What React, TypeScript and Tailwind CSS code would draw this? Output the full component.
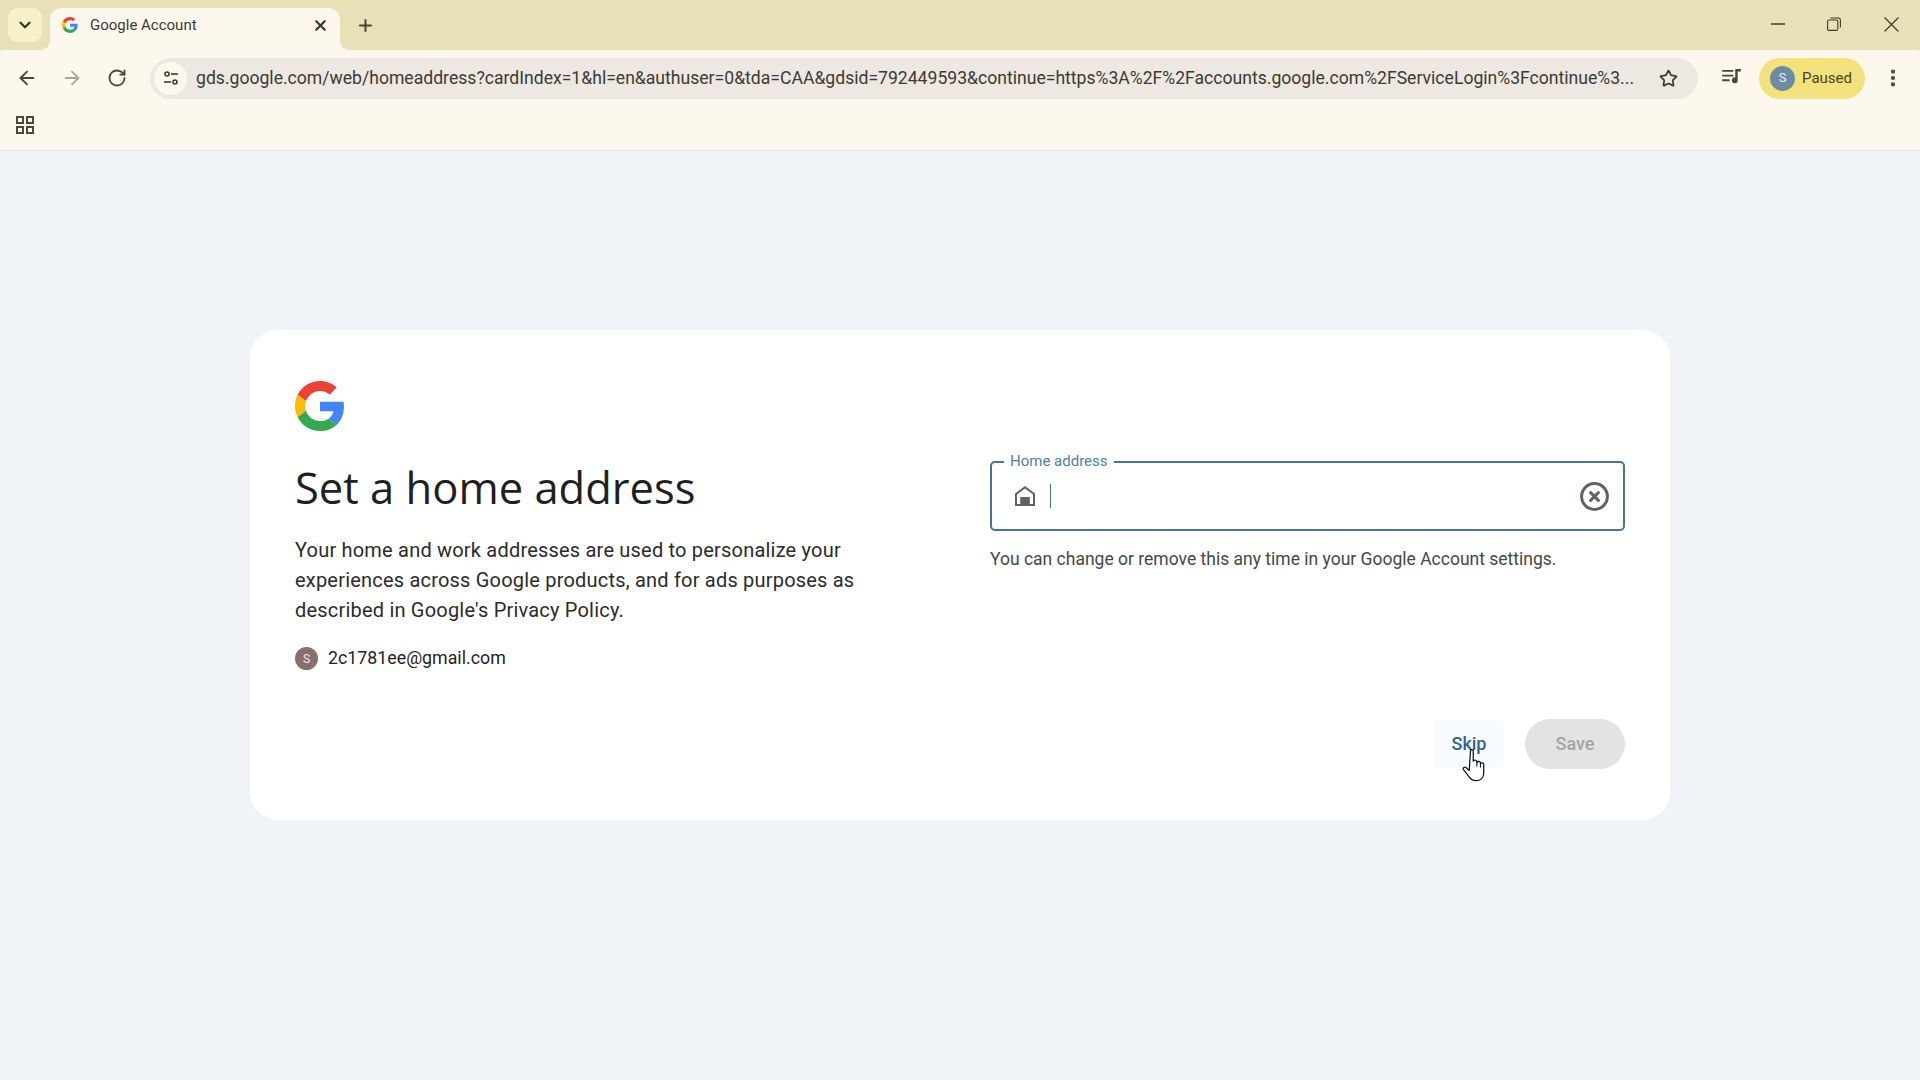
import React from 'react';
import { ArrowLeft, ArrowRight, ChevronDown, CircleX, MoreVertical, Plus, RotateCw, Star, X } from 'lucide-react';

const GoogleG: React.FC<{ className?: string }> = ({ className }) => (
  <svg viewBox="0 0 48 48" className={className}>
    <path fill="#EA4335" d="M24 9.5c3.54 0 6.71 1.22 9.21 3.6l6.85-6.85C35.9 2.38 30.47 0 24 0 14.62 0 6.51 5.38 2.56 13.22l7.98 6.19C12.43 13.72 17.74 9.5 24 9.5z" />
    <path fill="#4285F4" d="M46.98 24.55c0-1.57-.15-3.09-.38-4.55H24v9.02h12.94c-.58 2.96-2.26 5.48-4.78 7.18l7.73 6c4.51-4.18 7.09-10.36 7.09-17.65z" />
    <path fill="#FBBC05" d="M10.53 28.59c-.48-1.45-.76-2.99-.76-4.59s.27-3.14.76-4.59l-7.98-6.19C.92 16.46 0 20.12 0 24c0 3.88.92 7.54 2.56 10.78l7.97-6.19z" />
    <path fill="#34A853" d="M24 48c6.48 0 11.93-2.13 15.89-5.81l-7.73-6c-2.15 1.45-4.92 2.3-8.16 2.3-6.26 0-11.57-4.22-13.47-9.91l-7.98 6.19C6.51 42.62 14.62 48 24 48z" />
  </svg>
);

const TabStrip: React.FC = () => (
  <div className="h-[50px] flex bg-[#e8e1b8] pl-2">
    <div className="w-[34px] h-[34px] mt-2 rounded-[10px] bg-[#f8f1c8] flex items-center justify-center text-[#3a3524]">
      <ChevronDown size={18} strokeWidth={3} />
    </div>
    <div className="relative ml-2 w-[290px] h-[42px] mt-2 pb-[8px] bg-[#fdf8ee] rounded-t-[12px] flex items-center pl-[12px]">
      <span className="absolute bottom-0 -left-[10px] w-[10px] h-[10px] bg-[radial-gradient(circle_at_0_0,transparent_10px,#fdf8ee_10px)]" />
      <span className="absolute bottom-0 -right-[10px] w-[10px] h-[10px] bg-[radial-gradient(circle_at_100%_0,transparent_10px,#fdf8ee_10px)]" />
      <GoogleG className="w-4 h-4" />
      <span className="ml-[12px] text-[15px] text-[#3c3a33]">Google Account</span>
      <X size={17} strokeWidth={3} className="ml-auto mr-[11px] text-[#3a3524]" />
    </div>
    <div className="ml-[8px] h-[34px] mt-2 w-[34px] flex items-center justify-center text-[#4b4530]">
      <Plus size={19} strokeWidth={2.5} />
    </div>
    <div className="ml-auto flex text-[#3d3a2a]">
      <div className="w-[56px] h-[48px] flex items-center justify-center">
        <div className="w-[14px] h-[1.5px] bg-[#6d6647]" />
      </div>
      <div className="w-[56px] h-[48px] flex items-center justify-center">
        <svg viewBox="0 0 14 14" className="w-[14px] h-[14px]" fill="none" stroke="currentColor" strokeWidth="1.1">
          <rect x="0.6" y="3" width="10.2" height="10.4" rx="1.4" />
          <path d="M3.4 1h7.8c1.2 0 2.2 1 2.2 2.2v7.4" />
        </svg>
      </div>
      <div className="w-[58px] h-[48px] flex items-center justify-center">
        <svg viewBox="0 0 14 14" className="w-[15px] h-[15px]" fill="none" stroke="currentColor" strokeWidth="1.1">
          <path d="M0.5 0.5l13 13M13.5 0.5l-13 13" />
        </svg>
      </div>
    </div>
  </div>
);

const Toolbar: React.FC = () => (
  <div className="h-[50px] pt-[6px] bg-[#fdf8ee] rounded-t-[10px] flex items-center pl-[16px] text-[#4c473b]">
    <ArrowLeft size={22} strokeWidth={2} />
    <ArrowRight size={22} strokeWidth={2} className="ml-[23px] text-[#aaa69b]" />
    <RotateCw size={20} strokeWidth={2.2} className="ml-[24px]" />
    <div className="ml-[23px] w-[1548px] h-[41px] rounded-full bg-[#ede8e1] flex items-center pl-[4px] pr-[20px]">
      <div className="w-[33px] h-[33px] rounded-full bg-[#fdf8ee] flex items-center justify-center shrink-0">
        <svg viewBox="0 0 16 16" className="w-4 h-4" fill="none" stroke="#3f3b31" strokeWidth="1.6">
          <circle cx="4" cy="4" r="2" />
          <path d="M8 4h7" />
          <path d="M1 12h7" />
          <circle cx="12" cy="12" r="2" />
        </svg>
      </div>
      <span className="ml-[9px] pt-[1px] text-[17.6px] text-[#3c3a35] whitespace-nowrap w-[1446px]">
        gds.google.com/web/homeaddress?cardIndex=1&amp;hl=en&amp;authuser=0&amp;tda=CAA&amp;gdsid=792449593&amp;continue=https%3A%2F%2Faccounts.google.com%2FServiceLogin%3Fcontinue%3...
      </span>
      <Star size={19} strokeWidth={2.2} className="ml-auto text-[#3f3b31]" />
    </div>
    <svg viewBox="0 0 20 16" className="ml-[24px] w-[19px] h-[15px] -mt-[3px] text-[#4c473b]" fill="currentColor">
      <path d="M0 1h12v2H0zM0 6h12v2H0zM0 11h8v2H0zM14 0h6v2.6h-3.4V12a3.1 3.1 0 1 1-2.6-3z" />
    </svg>
    <div className="ml-[18px] w-[106px] h-[41px] rounded-full bg-[#f3e27c] flex items-center pl-[11px]">
      <div className="w-[25px] h-[25px] rounded-full bg-[#6d8ca3] text-[#e3f0f8] text-[13px] flex items-center justify-center">S</div>
      <span className="ml-[7px] text-[15px] text-[#4a4520]">Paused</span>
    </div>
    <MoreVertical size={22} strokeWidth={2.6} className="ml-[17px] text-[#4c473b]" />
  </div>
);

const BookmarksBar: React.FC = () => (
  <div className="h-[51px] bg-[#fdf8ee] border-b border-[#e6e4df] pl-[16px] pt-[16px]">
    <svg viewBox="0 0 18 18" className="w-[18px] h-[18px]" fill="none" stroke="#4c473b" strokeWidth="2">
      <rect x="1" y="1" width="6" height="6" />
      <rect x="11" y="1" width="6" height="6" />
      <rect x="1" y="11" width="6" height="6" />
      <rect x="11" y="11" width="6" height="6" />
    </svg>
  </div>
);

const HandCursor: React.FC = () => (
  <svg viewBox="0 0 26 34" className="absolute left-[28px] top-[28px] w-[27px] h-[35px]">
    <path
      d="M8.2 2.6c0-1.3 2.6-1.3 2.6 0v10.2c.2-1.5 3.3-1.5 3.5.1l.2 1c.2-1.4 3.1-1.3 3.3.3l.2.9c.4-1.2 3-.8 3 .8v8.3c0 4.6-3 7.6-7.4 7.6-3.4 0-5.4-1.4-7.2-4.2l-5-6.5c-1.1-1.6 1-3.3 2.5-2l3 2.7z"
      fill="#fff"
      stroke="#111"
      strokeWidth="1.2"
      strokeLinejoin="round"
    />
    <path d="M14.3 13v5M17.8 14.4V19" stroke="#111" strokeWidth="1" fill="none" />
  </svg>
);

const App: React.FC = () => {
  return (
    <div className="h-[1080px] overflow-hidden flex flex-col bg-[#f0f4f9] font-['Roboto',sans-serif]">
      <TabStrip />
      <Toolbar />
      <BookmarksBar />

      <main className="w-[1420px] h-[490px] mx-auto mt-[179px] bg-white rounded-[28px] px-[45px] pt-[51px] pb-[51px] flex">
        <section className="w-[695px] shrink-0">
          <GoogleG className="w-[50px] h-[50px]" />
          <h1 className="mt-[31px] text-[43.5px] leading-[52px] text-[#1f1f1f] font-['Open_Sans',sans-serif]">Set a home address</h1>
          <p className="mt-[21px] w-[590px] text-[20px] leading-[30px] tracking-[0.2px] text-[#2b2b2b]">
            Your home and work addresses are used to personalize your experiences across Google products, and for ads purposes as described in Google's Privacy Policy.
          </p>
          <div className="mt-[20px] flex items-center">
            <div className="w-[23px] h-[23px] rounded-full bg-[#8b6f6f] text-[#f3e6e6] text-[12px] flex items-center justify-center">S</div>
            <span className="ml-[10px] pb-[1px] text-[17.8px] text-[#1f1f1f]">2c1781ee@gmail.com</span>
          </div>
        </section>

        <section className="flex-1 flex flex-col">
          <div className="relative mt-[80px] h-[70px] border-2 border-[#4a7293] rounded-[5px] flex items-center pl-[22px] pr-[13px]">
            <span className="absolute -top-[11px] left-[12px] bg-white px-[6px] text-[15px] leading-[18px] text-[#4f80a9]">Home address</span>
            <svg viewBox="0 0 22 22" className="w-[22px] h-[22px]" fill="#5f6368">
              <path d="M11 1 1 8.6V21h20V8.6zm8 18h-3.2v-7H6.2v7H3V9.6l8-6.1 8 6.1z" />
              <path d="M7.5 13.5h7V21h-7z" />
            </svg>
            <div className="ml-[14px] w-px h-[24px] bg-[#4a7293]" />
            <CircleX size={31} strokeWidth={2.3} className="ml-auto text-[#5f6368]" />
          </div>
          <p className="mt-[16px] text-[17.5px] leading-[24px] text-[#444746]">You can change or remove this any time in your Google Account settings.</p>

          <div className="mt-auto flex justify-end items-center gap-[21px]">
            <div className="relative w-[70px] h-[48px] pb-[1px] rounded-[4px] bg-[#f8fbfe] flex items-center justify-center text-[18px] font-medium text-[#2f6295]">
              Skip
              <HandCursor />
            </div>
            <div className="w-[100px] h-[50px] pb-[1px] rounded-full bg-[#e3e3e3] flex items-center justify-center text-[18px] font-medium text-[#a3a3a3]">Save</div>
          </div>
        </section>
      </main>
    </div>
  );
};

export default App;
